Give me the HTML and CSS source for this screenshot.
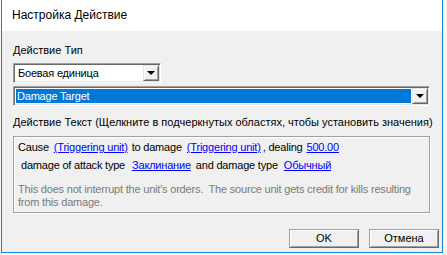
FILE: index.html
```html
<!DOCTYPE html>
<html>
<head>
    <meta charset="utf-8">
    <title>Настройка Действие</title>
    <link rel="stylesheet" href="styles.css">
</head>
<body>
    <div class="window">
        <div class="titlebar">Настройка Действие</div>
        <div class="content">
            <div class="label label-type">Действие Тип</div>
            <div class="combo combo-small">
                <div class="combo-field">Боевая единица</div>
                <div class="combo-btn"><span class="arrow"></span></div>
            </div>
            <div class="combo combo-wide">
                <div class="combo-field selected">Damage Target</div>
                <div class="combo-btn"><span class="arrow"></span></div>
            </div>
            <div class="label label-text">Действие Текст (Щелкните в подчеркнутых областях, чтобы установить значения)</div>
            <div class="panel">
                <div class="line line-first">
                    <span class="word w-cause">Cause</span>
                    <a class="param p-unit1">(Triggering unit)</a>
                    <span class="word w-todmg">to damage</span>
                    <a class="param p-unit2">(Triggering unit)</a>
                    <span class="word w-deal">, dealing</span>
                    <a class="param">500.00</a>
                </div>
                <div class="line line-second">
                    <span class="word w-attack">damage of attack type</span>
                    <a class="param p-attack">Заклинание</a>
                    <span class="word w-dmgtype">and damage type</span>
                    <a class="param">Обычный</a>
                </div>
                <div class="hint">This does not interrupt the unit's orders.&nbsp; The source unit gets credit for kills resulting from this damage.</div>
            </div>
            <div class="buttons">
                <a class="button">OK</a>
                <a class="button">Отмена</a>
            </div>
        </div>
    </div>
</body>
</html>
```

FILE: styles.css
```css
html {
    font-family: "Liberation Sans", Arial, sans-serif;
    font-size: 11px;
    color: #000;
}

body {
    margin: 0;
    padding: 0;
    overflow: hidden;
    background-color: #f7f7f7;
}

.window {
    margin-left: 1px;
    width: 440px;
    height: 252px;
    border: 1px solid #1883d7;
    border-top: 0;
    background-color: #f0f0f0;
}

.titlebar {
    height: 31px;
    line-height: 31px;
    padding-left: 10px;
    background-color: #fff;
    font-size: 12px;
}

.content {
    padding: 0 12px 0 11px;
}

.label {
    line-height: 13px;
    white-space: nowrap;
}

.label-type {
    margin-top: 13px;
}

.label-text {
    margin-top: 10px;
}

/* combo boxes */
.combo {
    display: flex;
    box-sizing: border-box;
    height: 20px;
    border: 1px solid;
    border-color: #a0a0a0 #fff #fff #a0a0a0;
    box-shadow: inset 1px 1px #696969, inset -1px -1px #e3e3e3;
    padding: 1px;
    background-color: #fff;
    letter-spacing: -0.2px;
}

.combo-small {
    width: 148px;
    margin-top: 6px;
}

.combo-wide {
    margin-top: 3px;
}

.combo-field {
    flex: 1;
    line-height: 16px;
    padding-left: 3px;
    white-space: nowrap;
}

.combo-field.selected {
    margin: 1px;
    line-height: 14px;
    padding-left: 1px;
    background-color: #0078d7;
    color: #fff;
}

.combo-btn {
    display: flex;
    align-items: center;
    justify-content: center;
    box-sizing: border-box;
    width: 16px;
    border: 1px solid;
    border-color: #e3e3e3 #696969 #696969 #e3e3e3;
    box-shadow: inset 1px 1px #fff, inset -1px -1px #a0a0a0;
    background-color: #f0f0f0;
}

.arrow {
    width: 0;
    height: 0;
    border-left: 4px solid transparent;
    border-right: 4px solid transparent;
    border-top: 4px solid #000;
}

/* action text panel */
.panel {
    box-sizing: border-box;
    height: 77px;
    margin-top: 7px;
    padding: 4px 5px 0 4px;
    border: 1px solid #a0a0a0;
    box-shadow: inset 1px 1px #fff, 1px 1px #fff;
    letter-spacing: -0.2px;
}

.line {
    display: flex;
    line-height: 13px;
    white-space: nowrap;
}

.line-first {
    margin-bottom: 5px;
}

.line-second {
    margin-bottom: 11px;
    padding-left: 3px;
}

.param {
    color: #0000ff;
    text-decoration: underline;
    cursor: pointer;
}

.w-cause { margin-right: 5px; }
.p-unit1 { margin-right: 4px; }
.w-todmg { margin-right: 5px; }
.p-unit2 { margin-right: 2px; }
.w-deal { margin-right: 4px; }
.w-attack { margin-right: 7px; }
.p-attack { margin-right: 5px; }
.w-dmgtype { margin-right: 6px; }

.hint {
    line-height: 13px;
    color: #7a7a7a;
}

/* buttons */
.buttons {
    display: flex;
    justify-content: flex-end;
    gap: 10px;
    margin-top: 16px;
    margin-right: -9px;
}

.button {
    display: block;
    box-sizing: border-box;
    width: 70px;
    height: 19px;
    line-height: 17px;
    text-align: center;
    border: 1px solid;
    border-color: #a0a0a0 #696969 #696969 #a0a0a0;
    box-shadow: inset 1px 1px #fff, inset -1px -1px #a0a0a0;
    background-color: #f0f0f0;
    cursor: pointer;
}
```
